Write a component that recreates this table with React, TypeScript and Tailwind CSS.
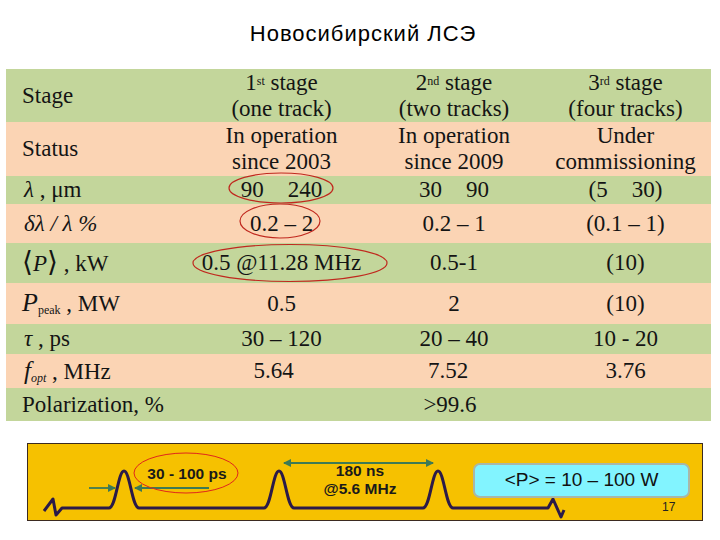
const G = "bg-[#c3d69b]";
const O = "bg-[#fbd4b4]";

type RowProps = {
  bg: string;
  h: string;
  label: React.ReactNode;
  cells: React.ReactNode[];
};

function Row({ bg, h, label, cells }: RowProps) {
  return (
    <div className={`grid grid-cols-[189px_173px_172px_171px] items-center ${bg} ${h}`}>
      <div className="pl-[16px] whitespace-nowrap">{label}</div>
      {cells.map((c, i) => (
        <div key={i} className="text-center whitespace-nowrap">
          {c}
        </div>
      ))}
    </div>
  );
}

function Stage({ n, sup, sub }: { n: string; sup: string; sub: string }) {
  return (
    <>
      <div>
        {n}
        <sup className="text-[12px] relative top-[-5px]">{sup}</sup> stage
      </div>
      <div>{sub}</div>
    </>
  );
}

function Pulses() {
  const pulse = (x: number) =>
    `L${x - 15},507 C${x - 8},507 ${x - 6},470 ${x},470 C${x + 6},470 ${x + 8},507 ${x + 15},507`;
  const wave = `M43,510 L52,498 L55,514 L61,507 ${pulse(123)} ${pulse(278)} ${pulse(437)} L547,507 L552,498 L560,516 L563,509`;
  return (
    <svg className="absolute inset-0" width="676" height="78" viewBox="27 443 676 78">
      <defs>
        <marker id="ah" markerWidth="8" markerHeight="8" refX="7" refY="4" orient="auto-start-reverse" markerUnits="userSpaceOnUse">
          <path d="M0,0 L8,4 L0,8 Z" fill="#3e7a55" />
        </marker>
      </defs>
      <path d={wave} fill="none" stroke="#2b1a48" strokeWidth="3" strokeLinejoin="round" />
      <line x1="88" y1="487" x2="114" y2="487" stroke="#3e7a55" strokeWidth="1.8" markerEnd="url(#ah)" />
      <line x1="208" y1="487" x2="134" y2="487" stroke="#3e7a55" strokeWidth="1.8" markerEnd="url(#ah)" />
      <line x1="283" y1="462" x2="432" y2="462" stroke="#3e7a55" strokeWidth="1.8" markerStart="url(#ah)" markerEnd="url(#ah)" />
      <ellipse cx="185" cy="472" rx="52" ry="20" fill="none" stroke="#e0261c" strokeWidth="1" />
      <g fontFamily="Liberation Sans, Arial, sans-serif" fontWeight="bold" fontSize="15.5" fill="#1a1a1a" textAnchor="middle">
        <text x="186" y="478">30 - 100 ps</text>
        <text x="359" y="475">180 ns</text>
        <text x="359" y="493">@5.6 MHz</text>
      </g>
    </svg>
  );
}

export default function App() {
  return (
    <div className="w-[720px] h-[540px] bg-white overflow-hidden font-serif">
      <div className="h-[69px] flex items-center justify-center pb-[3px] pl-[6px] font-sans">
        <h1 className="[font-family:Liberation_Sans,Arial,sans-serif] text-[22px] tracking-[1px] text-black">
          Новосибирский ЛСЭ
        </h1>
      </div>

      <div className="relative ml-[6px] w-[705px] text-[23px] leading-[26px] text-[#141414] [font-family:Liberation_Serif,DejaVu_Serif,serif]">
        <Row
          bg={G}
          h="h-[53px]"
          label="Stage"
          cells={[
            <Stage n="1" sup="st" sub="(one track)" />,
            <Stage n="2" sup="nd" sub="(two tracks)" />,
            <Stage n="3" sup="rd" sub="(four tracks)" />,
          ]}
        />
        <Row
          bg={O}
          h="h-[54px]"
          label="Status"
          cells={[
            <><div>In operation</div><div>since 2003</div></>,
            <><div>In operation</div><div>since 2009</div></>,
            <><div>Under</div><div>commissioning</div></>,
          ]}
        />
        <Row
          bg={G}
          h="h-[28px]"
          label={<span className="pl-[2px]"><i>λ</i> , μm</span>}
          cells={[
            <><span className="mr-[24px]">90</span>240</>,
            <><span className="mr-[24px]">30</span>90</>,
            <><span className="mr-[24px]">(5</span>30)</>,
          ]}
        />
        <Row
          bg={O}
          h="h-[39px]"
          label={<i className="pl-[2px]">δλ / λ %</i>}
          cells={["0.2 – 2", "0.2 – 1", "(0.1 – 1)"]}
        />
        <Row
          bg={G}
          h="h-[40px]"
          label={
            <span>
              <span className="text-[28px] [font-family:DejaVu_Serif,serif]">⟨</span>
              <i>P</i>
              <span className="text-[28px] [font-family:DejaVu_Serif,serif]">⟩</span> , kW
            </span>
          }
          cells={["0.5 @11.28 MHz", "0.5-1", "(10)"]}
        />
        <Row
          bg={O}
          h="h-[41px]"
          label={
            <span>
              <i className="text-[26px]">P</i>
              <sub className="text-[12px]">peak</sub> , MW
            </span>
          }
          cells={["0.5", "2", "(10)"]}
        />
        <Row
          bg={G}
          h="h-[30px]"
          label={<span className="pl-[2px]"><i>τ</i> , ps</span>}
          cells={["30 – 120", "20 – 40", "10 - 20"]}
        />
        <Row
          bg={O}
          h="h-[34px]"
          label={
            <span className="pl-[2px]">
              <i className="text-[25px]">f</i>
              <sub className="text-[12px] italic">opt</sub> , MHz
            </span>
          }
          cells={[<span className="pr-[16px]">5.64</span>, <span className="pr-[12px]">7.52</span>, "3.76"]}
        />
        <Row
          bg={G}
          h="h-[33px]"
          label="Polarization, %"
          cells={["", <span className="pr-[8px]">&gt;99.6</span>, ""]}
        />

        <svg className="absolute inset-0 pointer-events-none" width="705" height="352" viewBox="6 69 705 352">
          <g fill="none" stroke="#c0281e" strokeWidth="1.2">
            <ellipse cx="281" cy="188" rx="52" ry="15" />
            <ellipse cx="280" cy="221" rx="40" ry="17" />
            <ellipse cx="290" cy="263" rx="97" ry="18.5" />
          </g>
        </svg>
      </div>

      <div className="relative mt-[22px] ml-[27px] w-[676px] h-[78px] bg-[#f6c100] border-[1.5px] border-[#3b2a20] font-sans">
        <Pulses />
        <div className="absolute left-[445px] top-[19px] w-[217px] h-[35px] rounded-[7px] bg-[#82f4ff] border-2 border-[#a9b7a8] flex items-center justify-center [font-family:Liberation_Sans,Arial,sans-serif] text-[19px] text-[#111]">
          &lt;P&gt; = 10 – 100 W
        </div>
        <div className="absolute left-[634px] top-[54px] [font-family:Liberation_Sans,Arial,sans-serif] text-[12px] text-[#222]">
          17
        </div>
      </div>
    </div>
  );
}
